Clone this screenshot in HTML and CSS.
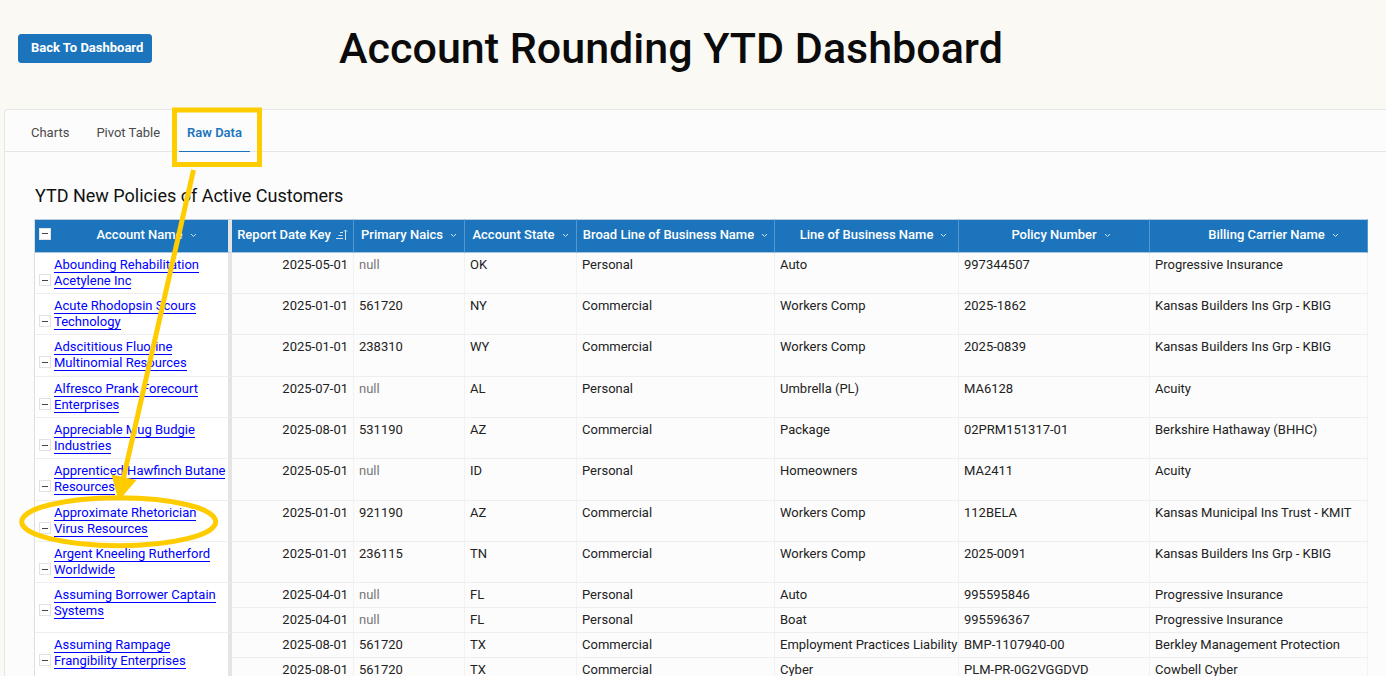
FILE: index.html
```html
<!DOCTYPE html>
<html lang="en">
<head>
    <meta charset="utf-8">
    <meta name="viewport" content="width=device-width, initial-scale=1">
    <title>Account Rounding YTD Dashboard</title>
    <link rel="stylesheet" href="styles.css">
</head>
<body>
    <header class="header">
        <button class="back" type="button">Back To Dashboard</button>
        <h1>Account Rounding YTD Dashboard</h1>
    </header>
    <main class="card">
        <nav class="tabs">
            <a href="#charts">Charts</a>
            <a href="#pivot">Pivot Table</a>
            <a href="#raw" class="active">Raw Data</a>
        </nav>
        <section class="report">
            <h2>YTD New Policies of Active Customers</h2>
            <table class="grid">
                <colgroup>
                    <col class="col-account">
                    <col class="col-date">
                    <col class="col-naics">
                    <col class="col-state">
                    <col class="col-broad">
                    <col class="col-line">
                    <col class="col-policy">
                    <col class="col-carrier">
                </colgroup>
                <thead>
                    <tr>
                        <th class="account"><div class="head"><button class="toggle" type="button" aria-label="Collapse all"></button><span class="label">Account Name</span><svg class="chevron" viewBox="0 0 7 5"><path d="M1 1l2.500 2.500L6 1"/></svg></div></th>
                        <th><div class="head">Report Date Key<svg class="sort" viewBox="0 0 12 12"><path d="M4 3.500h3M2.500 6.500h4M0 9.500h7M9.500 11V1M8 2.500L9.500 1L11 2.500"/></svg></div></th>
                        <th><div class="head">Primary Naics<svg class="chevron" viewBox="0 0 7 5"><path d="M1 1l2.500 2.500L6 1"/></svg></div></th>
                        <th><div class="head">Account State<svg class="chevron" viewBox="0 0 7 5"><path d="M1 1l2.500 2.500L6 1"/></svg></div></th>
                        <th><div class="head">Broad Line of Business Name<svg class="chevron" viewBox="0 0 7 5"><path d="M1 1l2.500 2.500L6 1"/></svg></div></th>
                        <th class="wide"><div class="head">Line of Business Name<svg class="chevron" viewBox="0 0 7 5"><path d="M1 1l2.500 2.500L6 1"/></svg></div></th>
                        <th class="wide"><div class="head">Policy Number<svg class="chevron" viewBox="0 0 7 5"><path d="M1 1l2.500 2.500L6 1"/></svg></div></th>
                        <th class="carrier"><div class="head">Billing Carrier Name<svg class="chevron" viewBox="0 0 7 5"><path d="M1 1l2.500 2.500L6 1"/></svg></div></th>
                    </tr>
                </thead>
                <tbody>
                    <tr>
                        <td class="account"><div class="name"><button class="toggle" type="button" aria-label="Collapse"></button><span><a href="#">Abounding Rehabilitation Acetylene Inc</a></span></div></td>
                        <td class="date">2025-05-01</td><td class="null">null</td><td>OK</td><td>Personal</td><td>Auto</td><td>997344507</td><td>Progressive Insurance</td>
                    </tr>
                    <tr>
                        <td class="account"><div class="name"><button class="toggle" type="button" aria-label="Collapse"></button><span><a href="#">Acute Rhodopsin Scours Technology</a></span></div></td>
                        <td class="date">2025-01-01</td><td>561720</td><td>NY</td><td>Commercial</td><td>Workers Comp</td><td>2025-1862</td><td>Kansas Builders Ins Grp - KBIG</td>
                    </tr>
                    <tr>
                        <td class="account"><div class="name"><button class="toggle" type="button" aria-label="Collapse"></button><span><a href="#">Adscititious Fluorine Multinomial Resources</a></span></div></td>
                        <td class="date">2025-01-01</td><td>238310</td><td>WY</td><td>Commercial</td><td>Workers Comp</td><td>2025-0839</td><td>Kansas Builders Ins Grp - KBIG</td>
                    </tr>
                    <tr>
                        <td class="account"><div class="name"><button class="toggle" type="button" aria-label="Collapse"></button><span><a href="#">Alfresco Prank Forecourt Enterprises</a></span></div></td>
                        <td class="date">2025-07-01</td><td class="null">null</td><td>AL</td><td>Personal</td><td>Umbrella (PL)</td><td>MA6128</td><td>Acuity</td>
                    </tr>
                    <tr>
                        <td class="account"><div class="name"><button class="toggle" type="button" aria-label="Collapse"></button><span><a href="#">Appreciable Mug Budgie Industries</a></span></div></td>
                        <td class="date">2025-08-01</td><td>531190</td><td>AZ</td><td>Commercial</td><td>Package</td><td>02PRM151317-01</td><td>Berkshire Hathaway (BHHC)</td>
                    </tr>
                    <tr>
                        <td class="account"><div class="name"><button class="toggle" type="button" aria-label="Collapse"></button><span><a href="#">Apprenticed Hawfinch Butane Resources</a></span></div></td>
                        <td class="date">2025-05-01</td><td class="null">null</td><td>ID</td><td>Personal</td><td>Homeowners</td><td>MA2411</td><td>Acuity</td>
                    </tr>
                    <tr>
                        <td class="account"><div class="name"><button class="toggle" type="button" aria-label="Collapse"></button><span><a href="#">Approximate Rhetorician Virus Resources</a></span></div></td>
                        <td class="date">2025-01-01</td><td>921190</td><td>AZ</td><td>Commercial</td><td>Workers Comp</td><td>112BELA</td><td>Kansas Municipal Ins Trust - KMIT</td>
                    </tr>
                    <tr>
                        <td class="account"><div class="name"><button class="toggle" type="button" aria-label="Collapse"></button><span><a href="#">Argent Kneeling Rutherford Worldwide</a></span></div></td>
                        <td class="date">2025-01-01</td><td>236115</td><td>TN</td><td>Commercial</td><td>Workers Comp</td><td>2025-0091</td><td>Kansas Builders Ins Grp - KBIG</td>
                    </tr>
                </tbody>
                <tbody class="multi">
                    <tr>
                        <td class="account" rowspan="2"><div class="name"><button class="toggle" type="button" aria-label="Collapse"></button><span><a href="#">Assuming Borrower Captain Systems</a></span></div></td>
                        <td class="date">2025-04-01</td><td class="null">null</td><td>FL</td><td>Personal</td><td>Auto</td><td>995595846</td><td>Progressive Insurance</td>
                    </tr>
                    <tr>
                        <td class="date">2025-04-01</td><td class="null">null</td><td>FL</td><td>Personal</td><td>Boat</td><td>995596367</td><td>Progressive Insurance</td>
                    </tr>
                    <tr>
                        <td class="account" rowspan="2"><div class="name"><button class="toggle" type="button" aria-label="Collapse"></button><span><a href="#">Assuming Rampage Frangibility Enterprises</a></span></div></td>
                        <td class="date">2025-08-01</td><td>561720</td><td>TX</td><td>Commercial</td><td>Employment Practices Liability</td><td>BMP-1107940-00</td><td>Berkley Management Protection</td>
                    </tr>
                    <tr>
                        <td class="date">2025-08-01</td><td>561720</td><td>TX</td><td>Commercial</td><td>Cyber</td><td>PLM-PR-0G2VGGDVD</td><td>Cowbell Cyber</td>
                    </tr>
                </tbody>
            </table>
        </section>
    </main>
    <!-- highlight: tab box, arrow and circled account -->
    <svg class="callout" width="280" height="560" viewBox="0 0 280 560">
        <rect x="174.500" y="110" width="85" height="54.500"/>
        <path d="M193.500 170L123 480"/>
        <ellipse cx="118.700" cy="521.700" rx="97" ry="24"/>
        <path class="tip" d="M111.500 474.500L136.500 480L118.500 501Z"/>
    </svg>
</body>
</html>
```

FILE: styles.css
```css
* {
    box-sizing: border-box;
}
body {
    margin: 0;
    height: 100vh;
    overflow: hidden;
    position: relative;
    font-family: Roboto, sans-serif;
    font-size: 13px;
    line-height: 16px;
    color: #222;
    background: #faf9f4;
}
.header {
    display: grid;
    grid-template-columns: 1fr auto 1fr;
    align-items: center;
    height: 109px;
    padding: 0 62px 13px 18px;
}
.header h1 {
    margin: 0;
    font-size: 43px;
    line-height: 52px;
    font-weight: 500;
    color: #0b0b0b;
}
.back {
    justify-self: start;
    height: 29px;
    padding: 0 8px 2px 12px;
    border: 1px solid #1c75bc;
    border-radius: 3px;
    background: #1c75bc;
    color: #fff;
    font: bold 13px Roboto, sans-serif;
}
.card {
    margin-left: 4px;
    border: 1px solid #e4e5e5;
    border-right: none;
    border-radius: 4px 0 0 0;
    background: #fcfcfc;
}
.tabs {
    display: flex;
    gap: 11px;
    padding: 0 18px;
    border-bottom: 1px solid #e4e5e5;
}
.tabs a {
    margin-bottom: -1px;
    padding: 15px 8px 10px;
    border-bottom: 1px solid transparent;
    color: #4a4a4a;
    text-decoration: none;
}
.tabs a.active {
    color: #1c75bc;
    border-color: #1c75bc;
    font-weight: 600;
}
.report {
    padding: 32px 18px 0 29px;
}
.report h2 {
    margin: 0 0 11px 1px;
    font-size: 18px;
    line-height: 24px;
    font-weight: 400;
    color: #111;
}
.grid {
    width: 100%;
    table-layout: fixed;
    border-collapse: separate;
    border-spacing: 0;
    border-left: 1px solid #dcdfe1;
}
.col-account { width: 197px; }
.col-date { width: 122px; }
.col-naics { width: 111px; }
.col-state { width: 112px; }
.col-broad { width: 198px; }
.col-line { width: 184px; }
.col-policy { width: 191px; }

.grid th {
    height: 34px;
    padding: 0 4px 2px;
    background: #1c75bc;
    border-top: 1px solid #b9cddc;
    border-bottom: 1px solid #a9c6dc;
    border-right: 1px solid #5598cd;
    color: #fff;
    font-weight: 500;
    white-space: nowrap;
}
.grid th.wide {
    padding-left: 18px;
}
.grid th.carrier {
    padding-left: 34px;
}
.head {
    display: flex;
    align-items: center;
    justify-content: center;
}
.head .label {
    margin-left: auto;
    padding-left: 14px;
}
.head .chevron {
    width: 7px;
    height: 5px;
    margin-left: 7px;
}
.account .head .chevron {
    margin-right: auto;
}
.head .sort {
    width: 12px;
    height: 12px;
    margin-left: 5px;
}
.head svg {
    flex: none;
    fill: none;
    stroke: #d5e5f2;
}
.grid td {
    height: 41px;
    padding: 4px 5px;
    vertical-align: top;
    border-right: 1px solid #f2f2f2;
    border-bottom: 1px solid #eee;
    white-space: nowrap;
}
.grid tr:nth-child(3n) td {
    height: 42px;
}
.grid .multi tr td {
    height: 25px;
}
.grid .account {
    padding-left: 4px;
    padding-right: 0;
    border-right: 4px solid #e4e4e4;
}
.grid td.account {
    background: #fff;
    white-space: normal;
}
.grid .date {
    text-align: right;
}
.grid .null {
    color: #777;
}
.name {
    display: flex;
    align-items: flex-end;
    gap: 3px;
}
.name a {
    color: #00f;
    text-decoration: none;
    border-bottom: 1px solid #00f;
}
.toggle {
    flex: none;
    display: flex;
    align-items: center;
    justify-content: center;
    width: 12px;
    height: 12px;
    margin-bottom: 3px;
    padding: 0;
    border: 1px solid #e2e2e2;
    background: #fff;
}
.toggle::before {
    content: "";
    width: 6px;
    height: 1px;
    background: #444;
}
.callout {
    position: absolute;
    top: 0;
    left: 0;
    pointer-events: none;
    fill: none;
    stroke: #ffcc00;
    stroke-width: 5;
}
.callout .tip {
    fill: #ffcc00;
    stroke: none;
}
```
